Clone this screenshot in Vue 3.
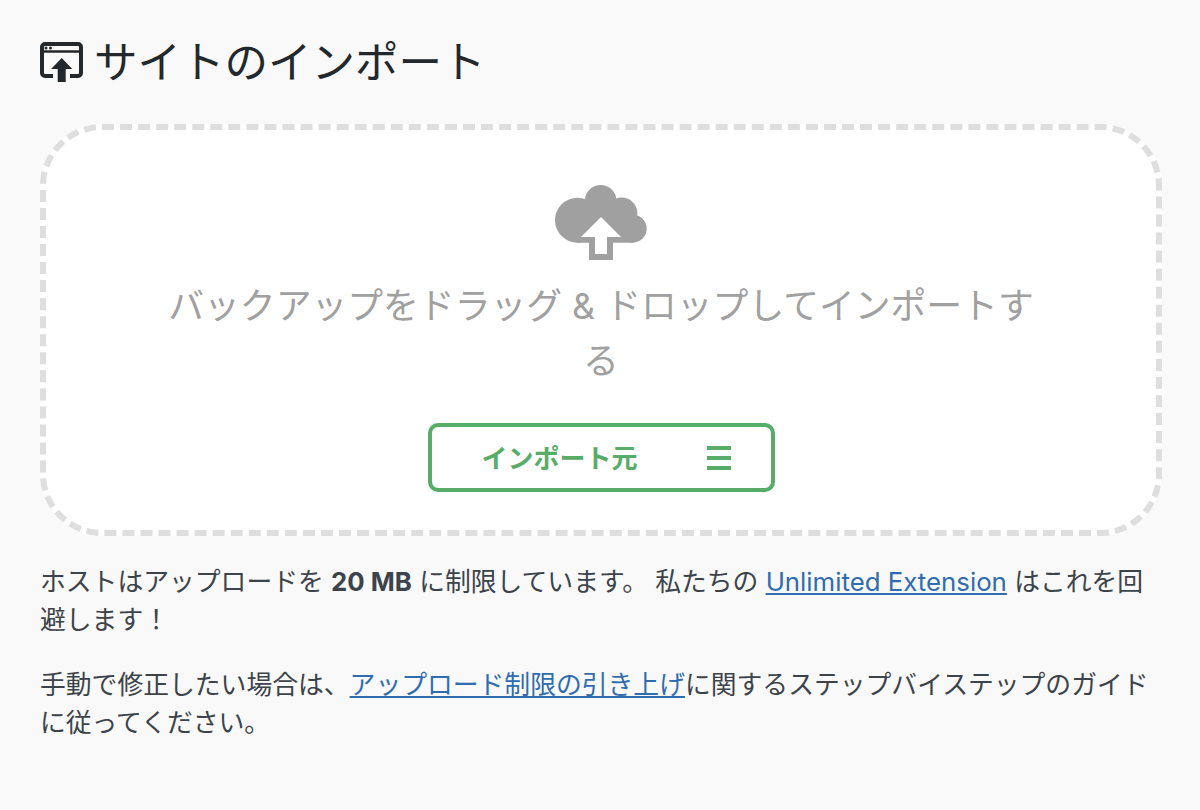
<script setup>
const title = 'サイトのインポート'
</script>

<template>
  <div class="page">
    <h2 class="title">
      <svg class="title-icon" width="43" height="40" viewBox="0 0 43 40" aria-hidden="true">
        <path d="M13 34H5a3 3 0 0 1-3-3V5a3 3 0 0 1 3-3h33a3 3 0 0 1 3 3v26a3 3 0 0 1-3 3h-8" fill="none" stroke="#23282d" stroke-width="4" />
        <path d="M2 9.5h39" stroke="#23282d" stroke-width="2.4" />
        <circle cx="6" cy="6" r="1.5" fill="#23282d" />
        <circle cx="10.5" cy="6" r="1.5" fill="#23282d" />
        <path d="M21.7 16l10.6 11h-6.6v13h-8V27h-6.6z" fill="#23282d" />
      </svg>
      {{ title }}
    </h2>

    <div class="drop">
      <svg class="cloud" width="92" height="75" viewBox="0 0 92 75" aria-hidden="true">
        <g fill="#a0a0a0">
          <circle cx="22.5" cy="35.2" r="22.5" />
          <circle cx="45.7" cy="15.7" r="15.7" />
          <circle cx="66.7" cy="28.3" r="15.7" />
          <circle cx="77.7" cy="43.7" r="14" />
          <rect x="22" y="22" width="56" height="35.7" />
        </g>
        <path d="M37 55v17h18V55" fill="#fff" stroke="#a0a0a0" stroke-width="6" />
        <path d="M46 32l20 20H52v17H40V52H26z" fill="#fff" />
      </svg>
      <p class="drop-text">バックアップをドラッグ &amp; ドロップしてインポートする</p>
      <button class="import-btn" type="button">
        <span class="import-label">インポート元</span>
        <span class="burger"><i></i><i></i><i></i></span>
      </button>
    </div>

    <p class="note">ホストはアップロードを <strong>20 MB</strong> に制限しています。 私たちの <a href="#">Unlimited Extension</a> はこれを回避します！</p>
    <p class="note">手動で修正したい場合は、<a href="#">アップロード制限の引き上げ</a>に関するステップバイステップのガイドに従ってください。</p>
  </div>
</template>

<style>
html, body {
  background: #f9f9f9;
}
</style>

<style scoped>
.page {
  box-sizing: border-box;
  width: 1200px;
  height: 810px;
  overflow: hidden;
  padding: 31px 38px 0 40px;
  background: #f9f9f9;
  color: #23282d;
  font-family: Inter, "Noto Sans CJK JP", sans-serif;
}

.title {
  display: flex;
  align-items: center;
  gap: 11px;
  margin: 0 0 31px;
  height: 62px;
  font-size: 43.5px;
  font-weight: 400;
  line-height: 62px;
}

.title-icon {
  flex: none;
}

.drop {
  box-sizing: border-box;
  width: 1122px;
  height: 412px;
  display: flex;
  flex-direction: column;
  align-items: center;
  padding-top: 55px;
  background: #fff;
  border: 6px dashed #dedede;
  border-radius: 62px;
}

.cloud {
  display: block;
}

.drop-text {
  width: 880px;
  margin: 19px 0 34px;
  color: #a0a0a0;
  font-size: 35.8px;
  line-height: 55px;
  text-align: center;
}

.import-btn {
  box-sizing: border-box;
  flex: none;
  width: 347px;
  height: 69px;
  display: flex;
  align-items: center;
  justify-content: space-between;
  padding: 0 40px 0 50px;
  background: #fff;
  border: 4px solid #57ad68;
  border-radius: 10px;
  color: #57ad68;
  font-family: inherit;
  font-size: 26px;
  font-weight: 700;
}

.import-label {
  padding-bottom: 3px;
}

.burger {
  display: flex;
  flex-direction: column;
  gap: 6px;
}

.burger i {
  display: block;
  width: 24px;
  height: 4px;
  background: #57ad68;
}

.note {
  margin: 0 0 27px;
  font-size: 25.8px;
  line-height: 38px;
  color: #3c434a;
}

.drop + .note {
  margin-top: 27px;
}

.note strong {
  font-weight: 700;
}

.note a {
  color: #2f6cb0;
  text-decoration: underline;
}
</style>
